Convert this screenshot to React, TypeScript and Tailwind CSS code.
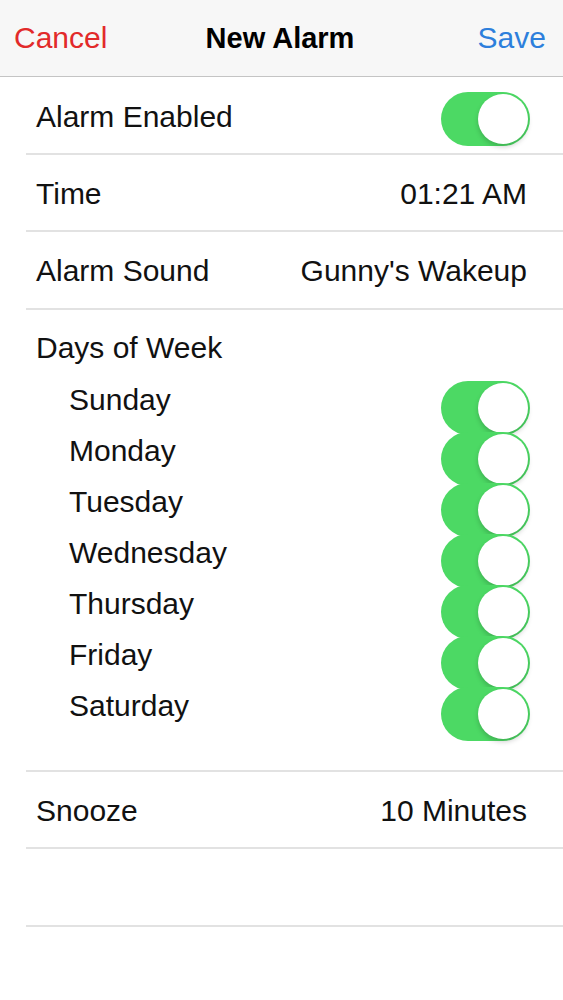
import React from 'react';

const DAYS = ['Sunday', 'Monday', 'Tuesday', 'Wednesday', 'Thursday', 'Friday', 'Saturday'];

function Toggle() {
    return (
        <div className="relative w-[89px] h-[54px] rounded-full bg-[#4cd964] shrink-0">
            <div className="absolute right-[2px] top-[2px] w-[50px] h-[50px] rounded-full bg-white shadow-[0_3px_5px_rgba(0,0,0,0.18)]" />
        </div>
    );
}

function Row({ label, value }: { label: string; value?: string }) {
    return (
        <div className="h-[77.5px] flex items-center justify-between border-b-2 border-[#e2e2e2] pl-[10px] pr-[36px] pt-[3px]">
            <span>{label}</span>
            {value && <span>{value}</span>}
        </div>
    );
}

export default function App() {
    return (
        <div className="min-h-[1000px] bg-white text-[#111] text-[30px] leading-none" style={{ fontFamily: '"Liberation Sans", Arial, sans-serif' }}>
            {/* Nav bar */}
            <div className="h-[77px] bg-[#f7f7f7] border-b border-[#c4c4c4] grid grid-cols-[1fr_auto_1fr] items-center px-[14px] pr-[17px]">
                <span className="text-[#e22a2a] justify-self-start">Cancel</span>
                <span className="font-bold text-[29px] text-black">New Alarm</span>
                <span className="text-[#2d7fdc] justify-self-end">Save</span>
            </div>

            <div className="pl-[26px]">
                <div className="h-[77.5px] flex items-center justify-between border-b-2 border-[#e2e2e2] pl-[10px] pr-[33px]">
                    <span className="pt-[5px]">Alarm Enabled</span>
                    <div className="mt-[8px]">
                        <Toggle />
                    </div>
                </div>
                <Row label="Time" value="01:21 AM" />
                <Row label="Alarm Sound" value="Gunny's Wakeup" />

                {/* Days of week */}
                <div className="border-b-2 border-[#e2e2e2] pt-[20px] pb-[38px] pl-[10px] pr-[33px]">
                    <div className="h-[36px] flex items-center">Days of Week</div>
                    <div className="mt-[9px] flex flex-col">
                        {DAYS.map(d => (
                            <div key={d} className="h-[51px] flex items-center justify-between pl-[33px]">
                                <span>{d}</span>
                                <div className="-my-[2px] relative top-[8px]">
                                    <Toggle />
                                </div>
                            </div>
                        ))}
                    </div>
                </div>

                <Row label="Snooze" value="10 Minutes" />
                <div className="h-[77.5px] border-b-2 border-[#e2e2e2]" />
            </div>
        </div>
    );
}
